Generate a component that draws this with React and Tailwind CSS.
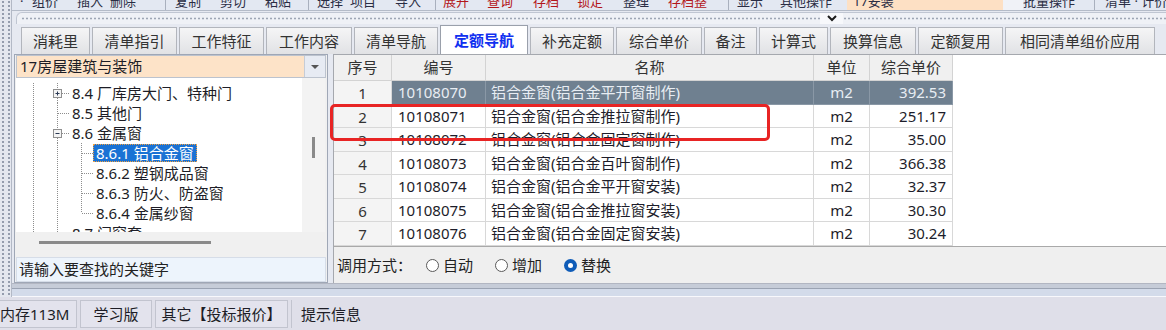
import React from 'react';

const tabs = [
  ['消耗里', 'w-[69px]'],
  ['清单指引', 'w-[85px]'],
  ['工作特征', 'w-[85px]'],
  ['工作内容', 'w-[86px]'],
  ['清单导航', 'w-[84px]'],
  ['定额导航', 'w-[88px]', true],
  ['补充定额', 'w-[84px]'],
  ['综合单价', 'w-[86px]'],
  ['备注', 'w-[53px]'],
  ['计算式', 'w-[69px]'],
  ['换算信息', 'w-[86px]'],
  ['定额复用', 'w-[85px]'],
  ['相同清单组价应用', 'w-[150px]'],
];

const rows = [
  ['1', '10108070', '铝合金窗(铝合金平开窗制作)', 'm2', '392.53', 'h-[24px]'],
  ['2', '10108071', '铝合金窗(铝合金推拉窗制作)', 'm2', '251.17', 'h-[23px]'],
  ['3', '10108072', '铝合金窗(铝合金固定窗制作)', 'm2', '35.00', 'h-[24px]'],
  ['4', '10108073', '铝合金窗(铝合金百叶窗制作)', 'm2', '366.38', 'h-[23px]'],
  ['5', '10108074', '铝合金窗(铝合金平开窗安装)', 'm2', '32.37', 'h-[24px]'],
  ['6', '10108075', '铝合金窗(铝合金推拉窗安装)', 'm2', '30.30', 'h-[23px]'],
  ['7', '10108076', '铝合金窗(铝合金固定窗安装)', 'm2', '30.24', 'h-[24px]'],
];

// tree rows: cells drawn as connector svgs, then label
const tree = [
  { cells: ['line', 'plus'], label: '8.4 厂库房大门、特种门' },
  { cells: ['line', 'tee'], label: '8.5 其他门' },
  { cells: ['line', 'minus'], label: '8.6 金属窗' },
  { cells: ['line', 'line', 'tee'], label: '8.6.1 铝合金窗', selected: true },
  { cells: ['line', 'line', 'tee'], label: '8.6.2 塑钢成品窗' },
  { cells: ['line', 'line', 'tee'], label: '8.6.3 防火、防盗窗' },
  { cells: ['line', 'line', 'corner'], label: '8.6.4 金属纱窗' },
  { cells: ['line', 'tee'], label: '8.7 门窗套' },
];

const dot = { stroke: '#8d8d8d', strokeWidth: 1, strokeDasharray: '1 1' };

function TreeCell({ kind }) {
  const box = kind === 'plus' || kind === 'minus';
  return (
    <svg width="24" height="20" className="shrink-0">
      {kind === 'line' && <line x1="12.5" y1="0" x2="12.5" y2="20" {...dot} />}
      {kind === 'tee' && (
        <>
          <line x1="12.5" y1="0" x2="12.5" y2="20" {...dot} />
          <line x1="13" y1="10.5" x2="24" y2="10.5" {...dot} />
        </>
      )}
      {kind === 'corner' && (
        <>
          <line x1="12.5" y1="0" x2="12.5" y2="10" {...dot} />
          <line x1="13" y1="10.5" x2="24" y2="10.5" {...dot} />
        </>
      )}
      {box && (
        <>
          <line x1="12.5" y1="0" x2="12.5" y2="6" {...dot} />
          <line x1="12.5" y1="15" x2="12.5" y2="20" {...dot} />
          <line x1="17" y1="10.5" x2="24" y2="10.5" {...dot} />
          <rect x="8.5" y="6.5" width="8" height="8" fill="#f4f4f4" stroke="#8f8f8f" />
          <line x1="10.5" y1="10.5" x2="14.5" y2="10.5" stroke="#2b3a55" />
          {kind === 'plus' && <line x1="12.5" y1="8.5" x2="12.5" y2="12.5" stroke="#2b3a55" />}
        </>
      )}
    </svg>
  );
}

function Radio({ checked, label }) {
  return (
    <div className="flex items-center gap-[4px]">
      {checked ? (
        <span className="flex h-[13px] w-[13px] items-center justify-center rounded-full bg-[#0f5cb8]">
          <span className="h-[5px] w-[5px] rounded-full bg-white" />
        </span>
      ) : (
        <span className="h-[13px] w-[13px] rounded-full border border-[#5a5a5a] bg-white" />
      )}
      <span>{label}</span>
    </div>
  );
}

function Sep({ w }) {
  return <span className={`${w} h-full shrink-0 border-l border-[#a9b0be]`} />;
}

function Toolbar() {
  const k = 'shrink-0 text-[#2a2d44]';
  const r = 'shrink-0 text-[#b3161a]';
  return (
    <div className="h-[11px] overflow-hidden border-b border-[#b4bbc8] bg-[#e3e8f2]">
      <div className="-mt-[9px] flex h-[20px] items-center pl-[8px] text-[13px] leading-[20px]">
        <span className={`${k} w-[12px]`}>·</span>
        <span className={`${k} w-[45px]`}>组价</span>
        <span className={`${k} w-[33px]`}>插入</span>
        <span className={`${k} w-[55px]`}>删除</span>
        <Sep w="w-[10px]" />
        <span className={`${k} w-[45px]`}>复制</span>
        <span className={`${k} w-[45px]`}>剪切</span>
        <span className={`${k} w-[43px]`}>粘贴</span>
        <Sep w="w-[9px]" />
        <span className={`${k} w-[33px]`}>选择</span>
        <span className={`${k} w-[45px]`}>项目</span>
        <span className={`${k} w-[40px]`}>导入</span>
        <Sep w="w-[8px]" />
        <span className={`${r} w-[44px]`}>展开</span>
        <span className={`${r} w-[46px]`}>查询</span>
        <span className={`${r} w-[44px]`}>存档</span>
        <span className={`${r} w-[46px]`}>锁定</span>
        <span className={`${k} w-[45px]`}>整理</span>
        <span className={`${r} w-[60px]`}>存档整</span>
        <Sep w="w-[9px]" />
        <span className={`${k} w-[43px]`}>显示</span>
        <span className={`${k} w-[67px]`}>其他操作</span>
        <span className="h-full w-[156px] shrink-0 bg-[#fde0c4] pl-[6px] text-[#2a2d44]">17安装</span>
        <span className="h-full w-[20px] shrink-0 bg-[#f0f2f7]" />
        <span className={`${k} w-[71px]`}>批量操作</span>
        <Sep w="w-[11px]" />
        <span className={k}>清单 · 计价</span>
      </div>
    </div>
  );
}

function DotLine() {
  return <div className="h-[3px] flex-1 bg-[radial-gradient(circle,#9ea6b5_0.9px,transparent_1.2px)] bg-[length:4px_3px]" />;
}

export default function App() {
  return (
    <div className="flex h-[330px] w-[1166px] flex-col overflow-hidden bg-[#e6e9f1] font-['Noto_Sans','Noto_Sans_CJK_SC',sans-serif] text-[15px] text-[#1d1d26]">
      <div className="flex h-[297px] shrink-0">
        {/* left gripper strip */}
        <div className="w-[12px] shrink-0 border-r border-[#b3b9c6] bg-[#e4e7ef] bg-[radial-gradient(circle,#949cad_0.9px,transparent_1.2px)] bg-[length:6px_4px]" />

        <div className="flex min-w-0 flex-1 flex-col">
          <Toolbar />

          {/* splitter band */}
          <div className="ml-[4px] mt-[1px] flex h-[12px] shrink-0 items-center rounded-tl-[6px] border-l border-t border-[#c0c6d2] bg-[#eff1f6]">
            <div className="flex flex-1 items-center pl-[4px]">
              <DotLine />
            </div>
            <div className="flex h-full w-[23px] items-center justify-center bg-[#f7f8fb]">
              <svg width="10" height="7" viewBox="0 0 10 7">
                <polyline points="1,1 5,5 9,1" fill="none" stroke="#1a1a1a" strokeWidth="2" />
              </svg>
            </div>
            <div className="flex w-[323px] items-center">
              <DotLine />
            </div>
          </div>

          {/* tabs */}
          <div className="flex h-[30px] shrink-0 items-end gap-[2px] pl-[9px]">
            {tabs.map(([t, w, active]) =>
              active ? (
                <div key={t} className={`${w} flex h-[29px] shrink-0 items-center justify-center border border-b-0 border-[#9aa0ab] bg-white font-bold text-[#1030f0]`}>
                  {t}
                </div>
              ) : (
                <div key={t} className={`${w} flex h-[27px] shrink-0 items-center justify-center border border-b-0 border-[#b2b5bc] bg-gradient-to-b from-[#f5f5f6] to-[#e1e2e5] text-[#333]`}>
                  {t}
                </div>
              )
            )}
          </div>

          {/* content */}
          <div className="flex h-[229px] shrink-0">
            {/* left panel */}
            <div className="ml-[2px] flex w-[314px] shrink-0 flex-col border border-[#9fa7b6] bg-[#f0f0f0]">
              <div className="mx-[1px] flex h-[23px] shrink-0 border border-[#bcc3ce] bg-[#fde3c8]">
                <div className="flex-1 pl-[3px] leading-[21px]">17房屋建筑与装饰</div>
                <div className="flex w-[21px] items-center justify-center border-l border-[#c6ccd6] bg-[#e7ebf3]">
                  <svg width="8" height="4" viewBox="0 0 8 4">
                    <polygon points="0,0 8,0 4,4" fill="#555" />
                  </svg>
                </div>
              </div>

              <div className="ml-[1px] flex h-[154px] shrink-0">
                <div className="w-[286px] overflow-hidden bg-white pl-[5px] pt-[5px]">
                  {tree.map((n) => (
                    <div key={n.label} className="flex h-[20px] items-center">
                      {n.cells.map((c, i) => (
                        <TreeCell key={i} kind={c} />
                      ))}
                      {n.selected ? (
                        <span className="h-[18px] whitespace-nowrap border border-dotted border-[#f0a040] bg-[#1a72d4] px-[2px] leading-[16px] text-white">
                          {n.label}
                        </span>
                      ) : (
                        <span className="whitespace-nowrap px-[3px] leading-[20px]">{n.label}</span>
                      )}
                    </div>
                  ))}
                </div>
                <div className="flex w-[23px] justify-center bg-[#f3f3f3] pt-[59px]">
                  <div className="h-[21px] w-[3px] bg-[#8a8a8a]" />
                </div>
              </div>

              <div className="flex h-[21px] shrink-0 items-center pl-[24px]">
                <div className="h-[3px] w-[172px] bg-[#8a8a8a]" />
              </div>

              <div className="mx-[1px] mt-[4px] flex h-[25px] shrink-0 items-center border border-[#d6dde8] bg-[#edf4fc] pl-[2px] text-[#222]">
                请输入要查找的关键字
              </div>
            </div>

            <div className="w-[5px] shrink-0" />

            {/* right panel */}
            <div className="relative flex w-[833px] shrink-0 flex-col border-l border-t border-[#a5a8ae]">
              <div className="flex-1 bg-white">
                <div className="flex h-[26px] text-[#333]">
                  <div className="flex w-[58px] items-center justify-center border-b border-r border-[#d3d3d3] bg-[#f0f0f0]">序号</div>
                  <div className="flex w-[94px] items-center justify-center border-b border-r border-[#d3d3d3] bg-[#f0f0f0]">编号</div>
                  <div className="flex w-[328px] items-center justify-center border-b border-r border-[#d3d3d3] bg-[#f0f0f0]">名称</div>
                  <div className="flex w-[56px] items-center justify-center border-b border-r border-[#d3d3d3] bg-[#f0f0f0]">单位</div>
                  <div className="flex w-[83px] items-center justify-center border-b border-r border-[#d3d3d3] bg-[#f0f0f0]">综合单价</div>
                </div>
                {rows.map(([no, code, name, unit, price, h], i) => {
                  const sel = i === 0;
                  const cell = sel ? 'bg-[#6f8090] text-[#e8edf3] border-[#8a98a6]' : 'bg-white text-[#1d1d2a] border-[#d8d8d8]';
                  return (
                    <div key={no} className={`flex ${h}`}>
                      <div className="flex w-[58px] items-center justify-center border-b border-r border-[#d8d8d8] bg-[#f4f4f4] pt-[2px] text-[#333]">{no}</div>
                      <div className={`flex w-[94px] items-center border-b border-r pl-[6px] ${cell}`}>{code}</div>
                      <div className={`flex w-[328px] items-center border-b border-r pl-[5px] ${cell}`}>{name}</div>
                      <div className={`flex w-[56px] items-center justify-center border-b border-r ${cell}`}>{unit}</div>
                      <div className={`flex w-[83px] items-center justify-end border-b border-r pr-[6px] ${cell}`}>{price}</div>
                    </div>
                  );
                })}
              </div>

              <div className="flex h-[37px] shrink-0 items-center gap-[22px] border-t border-[#a9a9a9] bg-[#efefef] pl-[3px] text-[#222]">
                <span className="mr-[-8px]">调用方式：</span>
                <Radio label="自动" />
                <Radio label="增加" />
                <Radio label="替换" checked />
              </div>

              {/* red annotation box */}
              <div className="absolute left-[-4px] top-[49px] h-[37px] w-[440px] rounded-[5px] border-[3px] border-[#e82424]" />
            </div>
          </div>

          {/* bottom band */}
          <div className="flex h-[14px] shrink-0 flex-col border-t border-[#b2b6c2] bg-[#c9cfdb]">
            <div className="h-[4px] bg-[#c6ccd8]" />
            <div className="h-[1px] bg-[#9ba3b3]" />
            <div className="flex-1 bg-[#d3dbea]" />
            <div className="h-[1px] bg-[#f8f8fc]" />
          </div>
        </div>
      </div>

      {/* status bar */}
      <div className="flex h-[33px] shrink-0 items-center gap-[3px] bg-[#dfdfe9] pt-[1px] text-[#1d1d26]">
        <div className="flex h-[28px] w-[77px] items-center border border-l-0 border-[#c2c4cf] bg-[#e3e3ed]">内存113M</div>
        <div className="flex h-[28px] w-[72px] items-center justify-center border border-[#c2c4cf] bg-[#e3e3ed]">学习版</div>
        <div className="flex h-[28px] w-[133px] items-center justify-center border border-[#c2c4cf] bg-[#e3e3ed]">其它【投标报价】</div>
        <div className="h-[28px] w-[4px] border-l border-[#c2c4cf]" />
        <div className="pl-[3px]">提示信息</div>
      </div>
    </div>
  );
}
